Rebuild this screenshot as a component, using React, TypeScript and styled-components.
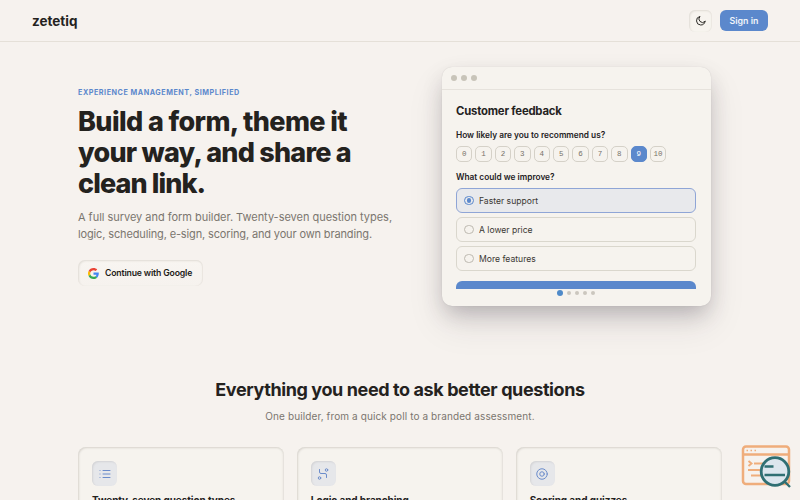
import React, { useState } from "react";
import styled, { createGlobalStyle } from "styled-components";

const GlobalStyle = createGlobalStyle`
  * {
    box-sizing: border-box;
  }
  body {
    margin: 0;
    background: #f6f2ee;
    color: #24221e;
    font-family: Inter, "Liberation Sans", sans-serif;
    overflow: hidden;
  }
  button {
    font-family: inherit;
    border: none;
    padding: 0;
    cursor: pointer;
  }
  h1, h2, h3, p {
    margin: 0;
  }
`;

const Page = styled.div`
  height: 500px;
  overflow: hidden;
`;
const Header = styled.header`
  display: flex;
  align-items: center;
  justify-content: space-between;
  height: 42px;
  padding: 0 32px;
  border-bottom: 1px solid #e5e0d8;
`;
const Logo = styled.div`
  font-size: 13.5px;
  font-weight: 700;
`;
const HeaderActions = styled.div`
  display: flex;
  align-items: center;
  gap: 8px;
`;
const ThemeBtn = styled.button`
  display: flex;
  align-items: center;
  justify-content: center;
  width: 23px;
  height: 22px;
  border-radius: 6px;
  color: #24221e;
  background: #f7f4ef;
  box-shadow: inset 1px 1px 2px #e0dcd6, inset -1px 0 1px #ebe7e1;
`;
const SignInBtn = styled.button`
  width: 48px;
  height: 21px;
  border-radius: 6px;
  font-size: 8.8px;
  font-weight: 600;
  color: #f2f5fa;
  background: #5b88cc;
`;

const Container = styled.main`
  width: 644px;
  margin: 0 auto;
`;
const Hero = styled.section`
  display: flex;
  justify-content: space-between;
  height: 337px;
  padding-right: 11px;
`;
const HeroText = styled.div`
  padding-top: 44px;
`;
const Eyebrow = styled.p`
  font-size: 7.2px;
  line-height: 13px;
  font-weight: 700;
  letter-spacing: 0.54px;
  text-transform: uppercase;
  color: #5b88cc;
`;
const HeroTitle = styled.h1`
  margin-top: 7px;
  font-size: 27px;
  line-height: 31px;
  font-weight: 800;
`;
const Line = styled.span<{ $track: number }>`
  display: block;
  white-space: nowrap;
  letter-spacing: ${(props) => props.$track}px;
`;
const Lead = styled.p`
  margin-top: 10px;
  font-size: 11px;
  line-height: 17px;
  color: #7b766e;
`;
const GoogleBtn = styled.button`
  display: flex;
  align-items: center;
  gap: 6px;
  width: 125px;
  height: 26px;
  margin-top: 17px;
  padding-left: 10px;
  border-radius: 7px;
  font-size: 8.7px;
  font-weight: 600;
  letter-spacing: -0.16px;
  white-space: nowrap;
  color: #1e1c19;
  background: linear-gradient(#f8f5f1, #f6f2ee);
  box-shadow: inset 1px 1px 2px #e0dcd6, inset -1px 0 1px #e9e5df;
`;

const Preview = styled.div`
  width: 269px;
  height: 239px;
  margin-top: 25px;
  border-radius: 10px;
  background: #f6f3ee;
  box-shadow: 0 0 1px rgba(60, 50, 60, 0.2), 0 10px 22px -4px rgba(50, 42, 55, 0.28),
    0 18px 36px rgba(50, 42, 55, 0.1);
`;
const PreviewBar = styled.div`
  display: flex;
  align-items: center;
  gap: 4px;
  height: 23px;
  padding-left: 9px;
  border-bottom: 1px solid #e6e2dc;
`;
const WindowDot = styled.span`
  width: 6px;
  height: 6px;
  border-radius: 50%;
  background: #c8c4b9;
`;
const PreviewBody = styled.div`
  height: 199px;
  padding: 14px 15px 0 14px;
  overflow: hidden;
`;
const PreviewTitle = styled.h3`
  font-size: 11.3px;
  line-height: 15px;
  font-weight: 700;
  letter-spacing: -0.19px;
`;
const Question = styled.p<{ $top: number }>`
  margin-top: ${(props) => props.$top}px;
  font-size: 8.3px;
  line-height: 12px;
  font-weight: 600;
`;
const Scale = styled.div`
  display: flex;
  gap: 3px;
  margin-top: 5px;
`;
const ScaleBtn = styled.button<{ $active: boolean }>`
  width: 16.4px;
  height: 16px;
  border: 1px solid ${(props) => (props.$active ? "#5b88cc" : "#d5d1c8")};
  border-radius: 5px;
  font-family: "Liberation Mono", monospace;
  font-size: 7.5px;
  line-height: 13px;
  color: ${(props) => (props.$active ? "#fff" : "#76726a")};
  background: ${(props) => (props.$active ? "#5b88cc" : "transparent")};
`;
const Options = styled.div`
  display: flex;
  flex-direction: column;
  gap: 4px;
  margin-top: 5px;
`;
const Option = styled.div<{ $active: boolean }>`
  display: flex;
  align-items: center;
  gap: 5.5px;
  height: 25px;
  padding-left: 7px;
  border: 1px solid ${(props) => (props.$active ? "#8fa5d6" : "#dad7cd")};
  border-radius: 6px;
  font-size: 8.6px;
  color: #3b3833;
  background: ${(props) => (props.$active ? "#e8e9ec" : "transparent")};
  cursor: pointer;
`;
const Radio = styled.span<{ $active: boolean }>`
  display: flex;
  align-items: center;
  justify-content: center;
  width: 9.5px;
  height: 9.5px;
  border: 1px solid ${(props) => (props.$active ? "#5b88cc" : "#bdb9b0")};
  border-radius: 50%;
  &::after {
    content: "";
    width: 4.5px;
    height: 4.5px;
    border-radius: 50%;
    background: ${(props) => (props.$active ? "#5b88cc" : "transparent")};
  }
`;
const SubmitBar = styled.div`
  height: 24px;
  margin-top: 10px;
  border-radius: 6px;
  background: #5b88cc;
`;
const Pager = styled.div`
  display: flex;
  align-items: center;
  justify-content: center;
  gap: 3.5px;
  height: 8px;
  padding-right: 0.5px;
`;
const PagerDot = styled.span<{ $active: boolean }>`
  width: ${(props) => (props.$active ? 6 : 4.5)}px;
  height: ${(props) => (props.$active ? 6 : 4.5)}px;
  border-radius: 50%;
  background: ${(props) => (props.$active ? "#4f8ac9" : "#cbc7be")};
`;

const SectionTitle = styled.h2`
  font-size: 18px;
  line-height: 22px;
  font-weight: 700;
  text-align: center;
  letter-spacing: -0.4px;
`;
const SectionSub = styled.p`
  margin-top: 8px;
  font-size: 10px;
  line-height: 14px;
  text-align: center;
  letter-spacing: 0.11px;
  color: #7b766e;
`;
const FeatureGrid = styled.div`
  display: grid;
  grid-template-columns: repeat(3, 1fr);
  gap: 12.5px;
  margin-top: 24px;
`;
const FeatureCard = styled.article`
  height: 120px;
  padding: 14px;
  border-radius: 8px;
  background: #f6f3ee;
  box-shadow: inset 1px 1px 2px #d9d5cf, inset -1px 0 2px #e2ded8;
`;
const FeatureIcon = styled.div`
  display: flex;
  align-items: center;
  justify-content: center;
  width: 25px;
  height: 25px;
  border-radius: 6px;
  color: #6b8ccb;
  background: #e6e7ea;
  box-shadow: inset 1px 1px 2px #d3d3d5;
`;
const FeatureTitle = styled.h3`
  margin-top: 7px;
  font-size: 10px;
  line-height: 14px;
  font-weight: 700;
  letter-spacing: -0.08px;
  white-space: nowrap;
`;
const Widget = styled.div`
  position: fixed;
  left: 741px;
  top: 444px;
  width: 50px;
  height: 46px;
`;

const GoogleIcon = () => (
  <svg width="11" height="11" viewBox="0 0 48 48">
    <path fill="#EA4335" d="M24 9.5c3.5 0 6.7 1.2 9.2 3.6l6.9-6.9C35.9 2.4 30.5 0 24 0 14.6 0 6.5 5.4 2.6 13.2l8 6.2C12.4 13.7 17.7 9.5 24 9.5z" />
    <path fill="#4285F4" d="M47 24.5c0-1.6-.2-3.1-.4-4.5H24v9h12.900c-.6 3-2.200 5.500-4.700 7.200l7.700 6C44.400 38 47 31.800 47 24.5z" />
    <path fill="#FBBC05" d="M10.5 28.600A14.5 14.5 0 0 1 10.5 19.400l-7.900-6.200a24 24 0 0 0 0 21.600z" />
    <path fill="#34A853" d="M24 48c6.5 0 11.900-2.100 15.900-5.800l-7.700-6c-2.200 1.500-4.900 2.300-8.200 2.300-6.300 0-11.600-4.200-13.500-9.900l-7.900 6.200C6.500 42.600 14.600 48 24 48z" />
  </svg>
);

const iconProps = {
  width: 12,
  height: 12,
  viewBox: "0 0 24 24",
  fill: "none",
  stroke: "currentColor",
  strokeWidth: 2,
  strokeLinecap: "round" as const,
  strokeLinejoin: "round" as const,
};

const ListIcon = () => (
  <svg {...iconProps}>
    <path d="M8 5h14M8 12h14M8 19h14M2 5h.01M2 12h.01M2 19h.01" />
  </svg>
);
const BranchIcon = () => (
  <svg {...iconProps}>
    <circle cx="19" cy="4" r="2.5" />
    <circle cx="5" cy="20" r="2.5" />
    <path d="M5 3v5q0 3 3 3h8q3 0 3 3v5" />
  </svg>
);
const TargetIcon = () => (
  <svg {...iconProps}>
    <circle cx="12" cy="12" r="10.5" />
    <circle cx="12" cy="12" r="4.5" />
  </svg>
);
const MoonIcon = () => (
  <svg {...iconProps} width={11.5} height={11.5}>
    <path d="M21 13.5A9 9 0 1 1 10.5 3a7 7 0 0 0 10.5 10.5z" />
  </svg>
);
const SearchWindowIcon = () => (
  <svg width="50" height="46" viewBox="0 0 50 46" fill="none">
    <rect x="2" y="2.5" width="46" height="37.5" rx="3" stroke="#efad7b" strokeWidth="2.5" />
    <path d="M2 10.5h46" stroke="#efad7b" strokeWidth="2.5" />
    <path d="M5.500 6.500h1.500M9.500 6.500h1.500M13.500 6.500h1.500" stroke="#efad7b" strokeWidth="1.5" />
    <path d="M7.500 17l3 2.500-3 2.500M13 19.500h9M7 26h12M10 31.500h11" stroke="#efad7b" strokeWidth="1.9" />
    <circle cx="34" cy="27.5" r="13.8" fill="#dce6ee" stroke="#2f6f73" strokeWidth="2.8" />
    <path d="M23.500 22.500h9M23.500 31h20.500M43.500 37.500l5.500 5.500" stroke="#2f6f73" strokeWidth="2.4" />
  </svg>
);

const scores = [0, 1, 2, 3, 4, 5, 6, 7, 8, 9, 10];
const answers = ["Faster support", "A lower price", "More features"];
const features = [
  { title: "Twenty-seven question types", icon: <ListIcon /> },
  { title: "Logic and branching", icon: <BranchIcon /> },
  { title: "Scoring and quizzes", icon: <TargetIcon /> },
];

const App = () => {
  const [score, setScore] = useState(9);
  const [answer, setAnswer] = useState("Faster support");

  return (
    <Page>
      <GlobalStyle />
      <Header>
        <Logo>zetetiq</Logo>
        <HeaderActions>
          <ThemeBtn aria-label="Toggle theme">
            <MoonIcon />
          </ThemeBtn>
          <SignInBtn>Sign in</SignInBtn>
        </HeaderActions>
      </Header>
      <Container>
        <Hero>
          <HeroText>
            <Eyebrow>Experience management, simplified</Eyebrow>
            <HeroTitle>
              <Line $track={-0.6}>Build a form, theme it</Line>
              <Line $track={-0.77}>your way, and share a</Line>
              <Line $track={-0.9}>clean link.</Line>
            </HeroTitle>
            <Lead>
              <Line $track={-0.03}>A full survey and form builder. Twenty-seven question types,</Line>
              <Line $track={-0.14}>logic, scheduling, e-sign, scoring, and your own branding.</Line>
            </Lead>
            <GoogleBtn>
              <GoogleIcon />
              Continue with Google
            </GoogleBtn>
          </HeroText>
          <Preview>
            <PreviewBar>
              <WindowDot />
              <WindowDot />
              <WindowDot />
            </PreviewBar>
            <PreviewBody>
              <PreviewTitle>Customer feedback</PreviewTitle>
              <Question $top={10}>How likely are you to recommend us?</Question>
              <Scale>
                {scores.map((n) => (
                  <ScaleBtn key={n} $active={n === score} onClick={() => setScore(n)}>
                    {n}
                  </ScaleBtn>
                ))}
              </Scale>
              <Question $top={9}>What could we improve?</Question>
              <Options>
                {answers.map((text) => (
                  <Option key={text} $active={text === answer} onClick={() => setAnswer(text)}>
                    <Radio $active={text === answer} />
                    {text}
                  </Option>
                ))}
              </Options>
              <SubmitBar />
            </PreviewBody>
            <Pager>
              {[0, 1, 2, 3, 4].map((i) => (
                <PagerDot key={i} $active={i === 0} />
              ))}
            </Pager>
          </Preview>
        </Hero>
        <SectionTitle>Everything you need to ask better questions</SectionTitle>
        <SectionSub>One builder, from a quick poll to a branded assessment.</SectionSub>
        <FeatureGrid>
          {features.map((feature) => (
            <FeatureCard key={feature.title}>
              <FeatureIcon>{feature.icon}</FeatureIcon>
              <FeatureTitle>{feature.title}</FeatureTitle>
            </FeatureCard>
          ))}
        </FeatureGrid>
      </Container>
      <Widget>
        <SearchWindowIcon />
      </Widget>
    </Page>
  );
};

export default App;
